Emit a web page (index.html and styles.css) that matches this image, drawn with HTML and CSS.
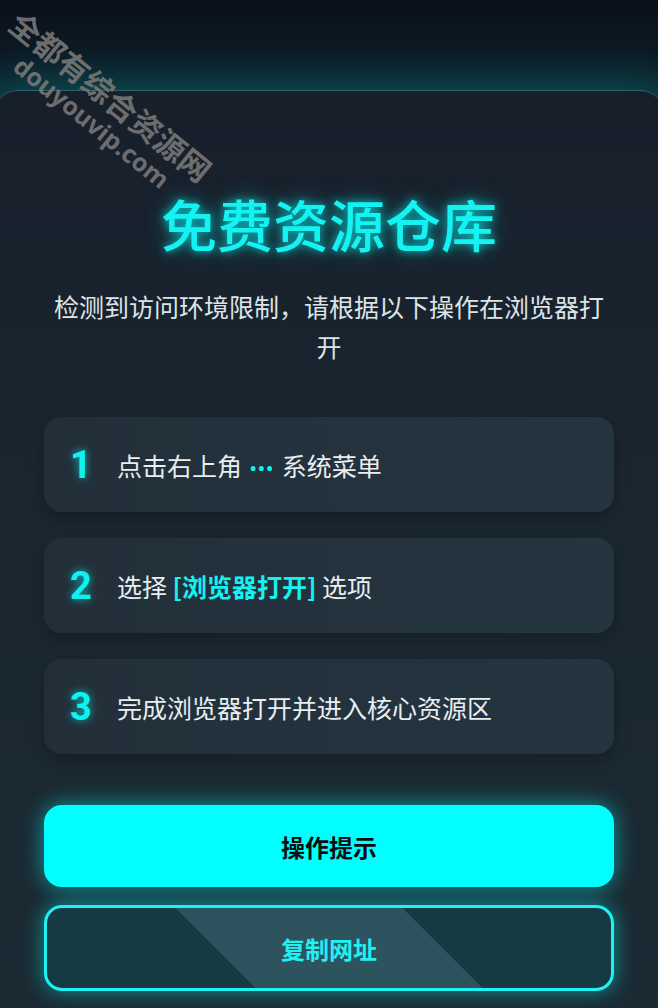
FILE: index.html
```html
<!DOCTYPE html>
<html>

<head>
    <meta charset="UTF-8">
    <title>免费资源仓库</title>
    <link rel="stylesheet" href="styles.css">
</head>

<body>

    <div class="panel">
        <h1 class="title">免费资源仓库</h1>
        <p class="subtitle">检测到访问环境限制，请根据以下操作在浏览器打开</p>

        <div class="steps">
            <div class="step">
                <span class="step-num">1</span>
                <span class="step-text">点击右上角 <span class="dots">•••</span> 系统菜单</span>
            </div>
            <div class="step">
                <span class="step-num">2</span>
                <span class="step-text">选择 <span class="hl">[浏览器打开]</span> 选项</span>
            </div>
            <div class="step">
                <span class="step-num">3</span>
                <span class="step-text">完成浏览器打开并进入核心资源区</span>
            </div>
        </div>

        <div class="actions">
            <button class="btn btn-primary">操作提示</button>
            <button class="btn btn-outline">复制网址</button>
        </div>
    </div>

    <!-- marca de agua sobre la captura -->
    <div class="watermark">
        <div class="wm-cn">全都有综合资源网</div>
        <div class="wm-en">douyouvip.com</div>
    </div>

</body>

</html>
```

FILE: styles.css
```css
/* estilos generales */
html,
body {
    overflow-x: hidden;
}

body {
    margin: 0;
    padding: 0;
    font-family: "Noto Sans CJK SC", "Noto Sans", sans-serif;
    background: linear-gradient(180deg, #0a0f19 0%, #0c1a24 50%, #0e2f36 100%);
    background-size: 100% 100px;
    background-repeat: no-repeat;
    background-color: #0e1620;
    color: #e6ecef;
}

/* panel principal */
.panel {
    margin: 90px -6px 0;
    padding: 100px 50px 40px;
    border-radius: 24px 24px 0 0;
    border-top: 1px solid rgba(90, 200, 210, 0.35);
    background: linear-gradient(180deg, #171f2b 0%, #1a2630 45%, #1b2b34 100%);
    box-shadow: 0 -6px 40px rgba(0, 190, 200, 0.22);
}

.title {
    margin: 0;
    font-size: 56px;
    line-height: 64px;
    font-weight: 500;
    text-align: center;
    color: #14f2f2;
    text-shadow: 0 0 10px rgba(0, 255, 255, 0.75), 0 0 24px rgba(0, 255, 255, 0.35);
}

.subtitle {
    margin: 31px 0 0;
    font-size: 25px;
    line-height: 40px;
    text-align: center;
    color: #dde4e8;
}

/* pasos */
.steps {
    margin-top: 51px;
    display: flex;
    flex-direction: column;
    gap: 26px;
}

.step {
    height: 95px;
    display: flex;
    align-items: center;
    padding-left: 26px;
    border-radius: 18px;
    background: linear-gradient(90deg, #222f39 0%, #243540 100%);
    box-shadow: 0 6px 14px rgba(0, 0, 0, 0.22);
}

.step-num {
    width: 47px;
    font-family: Roboto, sans-serif;
    font-size: 38px;
    font-weight: 700;
    color: #10f2f2;
    text-shadow: 0 0 8px rgba(0, 255, 255, 0.7);
}

.step-text {
    font-size: 25px;
    color: #e8eef1;
}

.dots {
    font-family: Roboto, sans-serif;
    font-size: 20px;
    font-weight: 700;
    letter-spacing: 1px;
    color: #14f2f2;
    margin: 0 2px;
}

.hl {
    font-weight: 700;
    color: #14f2f2;
}

/* botones */
.actions {
    margin-top: 51px;
    display: flex;
    flex-direction: column;
    gap: 18px;
}

.btn {
    display: block;
    width: 100%;
    border-radius: 18px;
    font-family: "Noto Sans CJK SC", sans-serif;
    font-size: 24px;
    font-weight: 700;
    cursor: pointer;
}

.btn-primary {
    height: 82px;
    border: none;
    background-color: #00ffff;
    color: #0b0f12;
    box-shadow: 0 0 22px rgba(0, 255, 255, 0.55);
}

.btn-outline {
    height: 86px;
    border: 3px solid #1ef2f2;
    background: linear-gradient(45deg, #153a44 32.3%, #2d545e 32.3%, #2d545e 67.7%, #153a44 67.7%);
    color: #22f0f0;
    box-shadow: 0 0 20px rgba(0, 255, 255, 0.5);
}

/* marca de agua */
.watermark {
    position: absolute;
    left: 26px;
    top: 4px;
    transform: rotate(39deg);
    transform-origin: 0 0;
    font-family: "Noto Sans CJK SC", sans-serif;
    font-weight: 700;
    color: rgba(118, 118, 118, 0.92);
    white-space: nowrap;
    pointer-events: none;
}

.wm-cn {
    font-size: 31px;
    line-height: 36px;
}

.wm-en {
    padding-left: 30px;
    font-family: "Open Sans", sans-serif;
    font-size: 25px;
    line-height: 28px;
}
```
